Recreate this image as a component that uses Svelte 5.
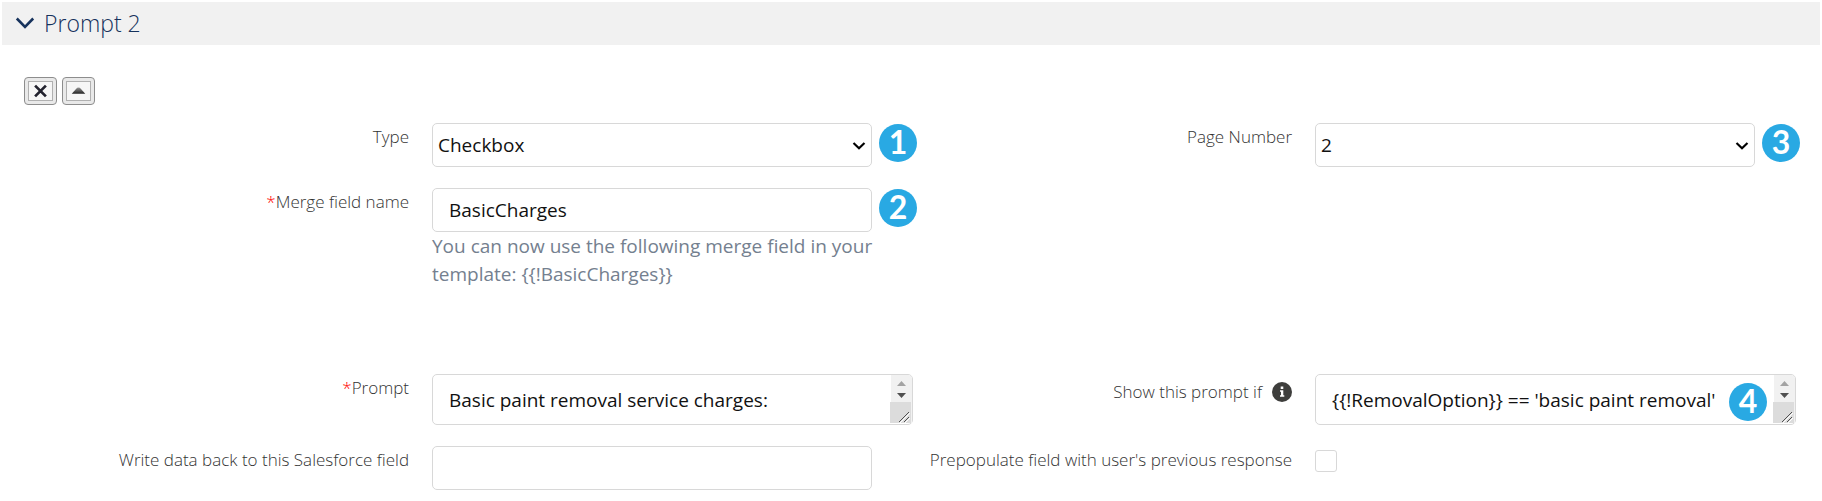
<script>
  let open = $state(true);
  let type = $state('Checkbox');
  let page = $state('2');
  let mergeField = $state('BasicCharges');
  let prompt = $state('Basic paint removal service charges:');
  let condition = $state("{{!RemovalOption}} == 'basic paint removal'");
  let target = $state('');
  let prepopulate = $state(false);
</script>

{#snippet chevron()}
  <svg class="chevron" viewBox="0 0 14 10" aria-hidden="true">
    <path d="M1.5 2 L7 7.2 L12.5 2" fill="none" stroke="#000" stroke-width="2.2" />
  </svg>
{/snippet}

{#snippet scrollbar()}
  <svg class="scrollbar" viewBox="0 0 22 48" aria-hidden="true">
    <path d="M1 0H18Q22 0 22 4V48H1Z" fill="#f1f1f1" />
    <path d="M7 11 L11.5 6 L16 11Z" fill="#a3a3a3" />
    <path d="M7 18 L11.5 23 L16 18Z" fill="#505050" />
    <path d="M0 27H21V48H0Z" fill="#dcdcdc" />
    <path d="M10 48 L20 38 M15 48 L20 43" stroke="#fff" stroke-width="1" />
    <path d="M9 47 L19 37 M14 47 L19 42" stroke="#505050" stroke-width="1" />
  </svg>
{/snippet}

<section>
  <h2>
    <button class="toggle" aria-expanded={open} onclick={() => (open = !open)}>
      <svg viewBox="0 0 20 14" width="20" height="14" aria-hidden="true">
        <path d="M1.8 2.5 L10 10.8 L18.2 2.5" fill="none" stroke="#16325c" stroke-width="2.6" />
      </svg>
      Prompt 2
    </button>
  </h2>

  {#if open}
    <div class="tools">
      <button aria-label="Remove prompt">
        <svg viewBox="0 0 25 20" aria-hidden="true">
          <path d="M6.500 4 L18.500 16 M18.500 4 L6.500 16" stroke="#22222e" stroke-width="3" />
        </svg>
      </button>
      <button aria-label="Move prompt up">
        <svg viewBox="0 0 25 20" aria-hidden="true">
          <defs>
            <linearGradient id="up" x1="0" y1="0" x2="0" y2="1">
              <stop offset="0" stop-color="#999" />
              <stop offset="1" stop-color="#222" />
            </linearGradient>
          </defs>
          <path d="M5 13 L11 6.500 Q12.500 5.500 14 6.500 L20 13Z" fill="url(#up)" />
        </svg>
      </button>
    </div>

    <div class="form">
      <div class="row">
        <label for="type">Type</label>
        <div class="control">
          <select id="type" bind:value={type}><option>Checkbox</option></select>
          {@render chevron()}
          <span class="badge">1</span>
        </div>
      </div>
      <div class="row">
        <label for="page">Page Number</label>
        <div class="control">
          <select id="page" bind:value={page}><option>2</option></select>
          {@render chevron()}
          <span class="badge">3</span>
        </div>
      </div>

      <div class="row merge">
        <label for="merge"><span class="required">*</span>Merge field name</label>
        <div class="field">
          <div class="control">
            <input id="merge" type="text" bind:value={mergeField} />
            <span class="badge">2</span>
          </div>
          <p>You can now use the following merge field in your template: {'{{!' + mergeField + '}}'}</p>
        </div>
      </div>
      <div></div>

      <div class="row">
        <label for="prompt"><span class="required">*</span>Prompt</label>
        <div class="control wide">
          <textarea id="prompt" rows="1" bind:value={prompt}></textarea>
          {@render scrollbar()}
        </div>
      </div>
      <div class="row">
        <label class="with-info" for="condition">
          Show this prompt if
          <svg viewBox="0 0 20 20" width="20" height="20" aria-hidden="true">
            <circle cx="10" cy="10" r="10" fill="#3e3e3c" />
            <path d="M8.7 4.5H11.3V7H8.7Z M8 8.200H11.300V13.200H12.300V14.700H8V13.200H9V9.700H8Z" fill="#fff" />
          </svg>
        </label>
        <div class="control wide">
          <textarea id="condition" rows="1" bind:value={condition}></textarea>
          {@render scrollbar()}
          <span class="badge inside">4</span>
        </div>
      </div>

      <div class="row">
        <label for="target">Write data back to this Salesforce field</label>
        <div class="control"><input id="target" type="text" bind:value={target} /></div>
      </div>
      <div class="row">
        <label for="prepopulate">Prepopulate field with user's previous response</label>
        <div class="check"><input id="prepopulate" type="checkbox" bind:checked={prepopulate} /></div>
      </div>
    </div>
  {/if}
</section>

<style>
  :global(body) {
    background: #fff;
  }
  section {
    padding: 2px 2px 10px;
    font-family: 'Open Sans', 'Noto Sans', sans-serif;
    color: #333;
  }
  h2 {
    margin: 0;
    background: #f1f1f1;
    font-weight: 400;
  }
  .toggle {
    display: flex;
    align-items: center;
    gap: 9px;
    width: 100%;
    height: 43px;
    padding: 0 13px 2px;
    border: 0;
    background: none;
    color: #16325c;
    font: 300 23px 'Open Sans', 'Noto Sans', sans-serif;
  }
  .tools {
    display: flex;
    gap: 5px;
    padding: 32px 22px 18px;
  }
  .tools button {
    width: 33px;
    height: 28px;
    padding: 3px;
    border: 1px solid #8d8d8d;
    border-radius: 4px;
    background: #e9e9e9;
  }
  .tools svg {
    display: block;
    box-sizing: border-box;
    width: 25px;
    height: 20px;
    border: 1px solid #b0b0b0;
    background: #f6f6f6;
  }
  .form {
    display: grid;
    grid-template-columns: 1fr 1fr;
    row-gap: 21px;
    padding: 0 26px;
  }
  .row {
    display: grid;
    grid-template-columns: 381fr 479fr;
    column-gap: 23px;
    align-items: start;
  }
  .merge {
    min-height: 165px;
  }
  label {
    padding-top: 3px;
    font-size: 17px;
    font-weight: 300;
    line-height: 22px;
    text-align: right;
  }
  .required {
    color: #f00;
  }
  .with-info {
    display: flex;
    justify-content: flex-end;
    align-items: center;
    gap: 10px;
    padding-top: 7px;
  }
  .control {
    position: relative;
    margin-right: 39px;
  }
  .wide {
    margin-right: -2px;
  }
  select,
  input[type='text'],
  textarea {
    display: block;
    box-sizing: border-box;
    width: 100%;
    height: 44px;
    margin: 0;
    padding: 0 16px;
    border: 1px solid #d8d8d8;
    border-radius: 5px;
    background: #fff;
    color: #111;
    font: 400 19px 'Open Sans', 'Noto Sans', sans-serif;
    outline: 0;
  }
  select {
    appearance: none;
    padding: 0 5px;
  }
  textarea {
    height: 51px;
    padding: 11px 30px 8px 16px;
    line-height: 28px;
    overflow: hidden;
    white-space: nowrap;
    resize: none;
  }
  .chevron {
    position: absolute;
    top: 18px;
    right: 6px;
    width: 14px;
    height: 10px;
    pointer-events: none;
  }
  .scrollbar {
    position: absolute;
    top: 1px;
    right: 1px;
    width: 22px;
    height: 48px;
  }
  .badge {
    position: absolute;
    top: 1px;
    left: calc(100% + 7px);
    width: 38px;
    height: 38px;
    border-radius: 50%;
    background: #29a9e3;
    color: #fff;
    font: 700 32px/36px Lato, sans-serif;
    text-align: center;
  }
  .inside {
    top: 9px;
    left: auto;
    right: 29px;
  }
  p {
    margin: 0 -8px 0 0;
    color: #74808f;
    font-size: 19px;
    line-height: 28px;
  }
  .check {
    padding-top: 4px;
  }
  input[type='checkbox'] {
    appearance: none;
    display: block;
    box-sizing: border-box;
    width: 22px;
    height: 22px;
    margin: 0;
    border: 1px solid #d8d8d8;
    border-radius: 3px;
    background: #fff;
  }
  input[type='checkbox']:checked {
    background: #0070d2;
  }
</style>
